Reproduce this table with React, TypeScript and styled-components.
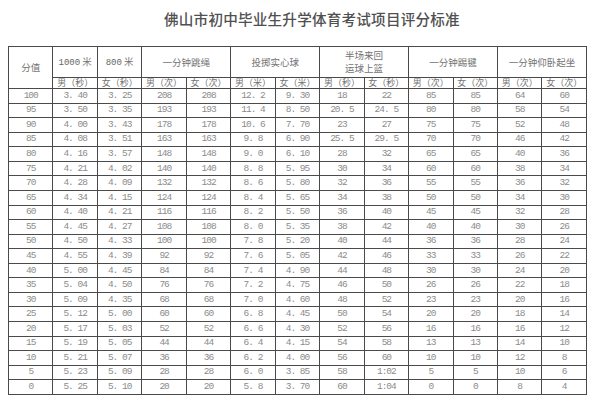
import React from "react";
import styled, { createGlobalStyle } from "styled-components";

const GlobalStyle = createGlobalStyle`
  html, body {
    margin: 0;
    padding: 0;
    background: #ffffff;
  }
`;

const Page = styled.div`
  width: 600px;
  height: 403px;
  padding: 10px 0 0 8px;
  box-sizing: border-box;
  overflow: hidden;
  background: #ffffff;
`;

const Title = styled.h1`
  margin: 0;
  padding-left: 156px;
  height: 36px;
  font-family: "Noto Sans CJK SC", sans-serif;
  font-size: 14.6px;
  line-height: 18px;
  font-weight: 500;
  color: #505050;
  letter-spacing: 0.2px;
`;

const ScoreTable = styled.table`
  width: 579px;
  table-layout: fixed;
  border-collapse: collapse;
  border: 1.5px solid #3f3f3f;
`;

const HeadRow = styled.tr<{ $h: number }>`
  height: ${(p) => p.$h}px;
`;

const HeadCell = styled.th<{ $small?: boolean }>`
  padding: 0;
  border: 1px solid #4a4a4a;
  font-family: "Noto Sans CJK SC", sans-serif;
  font-weight: 400;
  font-size: ${(p) => (p.$small ? "9px" : "9.5px")};
  line-height: ${(p) => (p.$small ? "10px" : "13px")};
  color: #737373;
  text-align: center;
  white-space: nowrap;
  overflow: hidden;
`;

const Latin = styled.span`
  font-family: "Liberation Mono", monospace;
  font-size: 9px;
  color: #666;
`;

const DataRow = styled.tr`
  height: 14.57px;
`;

const Cell = styled.td`
  padding: 0;
  border: 1px solid #4a4a4a;
  border-top-width: 1.5px;
  font-family: "Liberation Mono", monospace;
  font-size: 9.5px;
  letter-spacing: -1px;
  line-height: 12px;
  color: #8c8c8c;
  text-align: center;
  white-space: nowrap;
`;

const scores = [100, 95, 90, 85, 80, 75, 70, 65, 60, 55, 50, 45, 40, 35, 30, 25, 20, 15, 10, 5, 0];

const run1000 = ["3. 40", "3. 50", "4. 00", "4. 08", "4. 16", "4. 21", "4. 28", "4. 34", "4. 40", "4. 45", "4. 50", "4. 55", "5. 00", "5. 04", "5. 09", "5. 12", "5. 17", "5. 19", "5. 21", "5. 23", "5. 25"];
const run800 = ["3. 25", "3. 35", "3. 43", "3. 51", "3. 57", "4. 02", "4. 09", "4. 15", "4. 21", "4. 27", "4. 33", "4. 39", "4. 45", "4. 50", "4. 35", "5. 00", "5. 03", "5. 05", "5. 07", "5. 09", "5. 10"];
const rope = ["208", "193", "178", "163", "148", "140", "132", "124", "116", "108", "100", "92", "84", "76", "68", "60", "52", "44", "36", "28", "20"];
const ballM = ["12. 2", "11. 4", "10. 6", "9. 8", "9. 0", "8. 8", "8. 6", "8. 4", "8. 2", "8. 0", "7. 8", "7. 6", "7. 4", "7. 2", "7. 0", "6. 8", "6. 6", "6. 4", "6. 2", "6. 0", "5. 8"];
const ballF = ["9. 30", "8. 50", "7. 70", "6. 90", "6. 10", "5. 95", "5. 80", "5. 65", "5. 50", "5. 35", "5. 20", "5. 05", "4. 90", "4. 75", "4. 60", "4. 45", "4. 30", "4. 15", "4. 00", "3. 85", "3. 70"];
const dribM = ["18", "20. 5", "23", "25. 5", "28", "30", "32", "34", "36", "38", "40", "42", "44", "46", "48", "50", "52", "54", "56", "58", "60"];
const dribF = ["22", "24. 5", "27", "29. 5", "32", "34", "36", "38", "40", "42", "44", "46", "48", "50", "52", "54", "56", "58", "60", "1:02", "1:04"];
const kick = ["85", "80", "75", "70", "65", "60", "55", "50", "45", "40", "36", "33", "30", "26", "23", "20", "16", "13", "10", "5", "0"];
const situpM = ["64", "58", "52", "46", "40", "38", "36", "34", "32", "30", "28", "26", "24", "22", "20", "18", "16", "14", "12", "10", "8"];
const situpF = ["60", "54", "48", "42", "36", "34", "32", "30", "28", "26", "24", "22", "20", "18", "16", "14", "12", "10", "8", "6", "4"];

const units = ["男（秒）", "女（秒）", "男（次）", "女（次）", "男（米）", "女（米）", "男（秒）", "女（秒）", "男（次）", "女（次）", "男（次）", "女（次）"];

export default function App() {
  return (
    <>
      <GlobalStyle />
      <Page>
        <Title>佛山市初中毕业生升学体育考试项目评分标准</Title>
        <ScoreTable>
          <thead>
            <HeadRow $h={31}>
              <HeadCell rowSpan={2}>分值</HeadCell>
              <HeadCell>
                <Latin>1000</Latin> 米
              </HeadCell>
              <HeadCell>
                <Latin>800</Latin> 米
              </HeadCell>
              <HeadCell colSpan={2}>一分钟跳绳</HeadCell>
              <HeadCell colSpan={2}>投掷实心球</HeadCell>
              <HeadCell colSpan={2}>
                半场来回
                <br />
                运球上篮
              </HeadCell>
              <HeadCell colSpan={2}>一分钟踢毽</HeadCell>
              <HeadCell colSpan={2}>一分钟仰卧起坐</HeadCell>
            </HeadRow>
            <HeadRow $h={11}>
              {units.map((u, i) => (
                <HeadCell key={i} $small>
                  {u}
                </HeadCell>
              ))}
            </HeadRow>
          </thead>
          <tbody>
            {scores.map((s, i) => (
              <DataRow key={s}>
                <Cell>{s}</Cell>
                <Cell>{run1000[i]}</Cell>
                <Cell>{run800[i]}</Cell>
                <Cell>{rope[i]}</Cell>
                <Cell>{rope[i]}</Cell>
                <Cell>{ballM[i]}</Cell>
                <Cell>{ballF[i]}</Cell>
                <Cell>{dribM[i]}</Cell>
                <Cell>{dribF[i]}</Cell>
                <Cell>{kick[i]}</Cell>
                <Cell>{kick[i]}</Cell>
                <Cell>{situpM[i]}</Cell>
                <Cell>{situpF[i]}</Cell>
              </DataRow>
            ))}
          </tbody>
        </ScoreTable>
      </Page>
    </>
  );
}
